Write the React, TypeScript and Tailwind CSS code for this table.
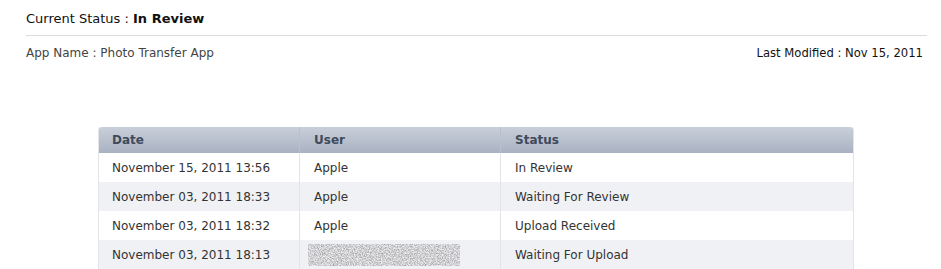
const rows = [
  { date: "November 15, 2011 13:56", user: "Apple", status: "In Review" },
  { date: "November 03, 2011 18:33", user: "Apple", status: "Waiting For Review" },
  { date: "November 03, 2011 18:32", user: "Apple", status: "Upload Received" },
  { date: "November 03, 2011 18:13", user: null, status: "Waiting For Upload" },
];

// pixelated, redacted user name
const Blurred = () => (
  <svg width="152" height="22" className="block">
    <filter id="noise">
      <feTurbulence type="fractalNoise" baseFrequency="0.75" numOctaves="3" seed="7" />
      <feColorMatrix type="matrix" values="0 0 0 0 0.35  0 0 0 0 0.35  0 0 0 0 0.37  2.2 0 0 0 -0.75" />
    </filter>
    <rect width="152" height="22" fill="#ebebed" />
    <rect width="152" height="22" filter="url(#noise)" />
  </svg>
);

export default function App() {
  return (
    <div className="w-[941px] h-[269px] bg-white overflow-hidden font-['DejaVu_Sans',sans-serif]">
      <div className="pl-[26px] pr-[14px] pt-[10px]">
        <h1 className="text-[13px] text-[#111] leading-[18px]">
          Current Status : <span className="font-bold">In Review</span>
        </h1>
        <div className="mt-[7px] border-t border-[#dcdcdc]" />
        <div className="flex justify-between mt-[9px] pr-[4px] text-[12px] leading-[16px]">
          <span className="text-[#444]">App Name : Photo Transfer App</span>
          <span className="text-[#111] text-[11.6px]">Last Modified : Nov 15, 2011</span>
        </div>
      </div>

      <div className="ml-[98px] mt-[66px] w-[756px] rounded-t-[3px] border-x border-[#e2e4e8] text-[12px]">
        <div className="grid grid-cols-[201px_201px_1fr] h-[26px] items-center rounded-t-[3px] bg-gradient-to-b from-[#c9cfda] to-[#a9b2c2] font-bold text-[#3f4a5b]">
          <div className="pl-[13px] border-r border-[#b9c0cc] h-full flex items-center">Date</div>
          <div className="pl-[14px] border-r border-[#b9c0cc] h-full flex items-center">User</div>
          <div className="pl-[14px]">Status</div>
        </div>
        {rows.map((r, i) => (
          <div
            key={i}
            className={`grid grid-cols-[201px_201px_1fr] h-[29px] items-center text-[#333] ${i % 2 ? "bg-[#f0f1f4]" : "bg-white"}`}
          >
            <div className="pl-[13px] border-r border-[#e4e4e6] h-full flex items-center">{r.date}</div>
            <div className="pl-[14px] border-r border-[#e4e4e6] h-full flex items-center">
              {r.user ? r.user : <div className="-ml-[6px]"><Blurred /></div>}
            </div>
            <div className="pl-[14px]">{r.status}</div>
          </div>
        ))}
      </div>
    </div>
  );
}
